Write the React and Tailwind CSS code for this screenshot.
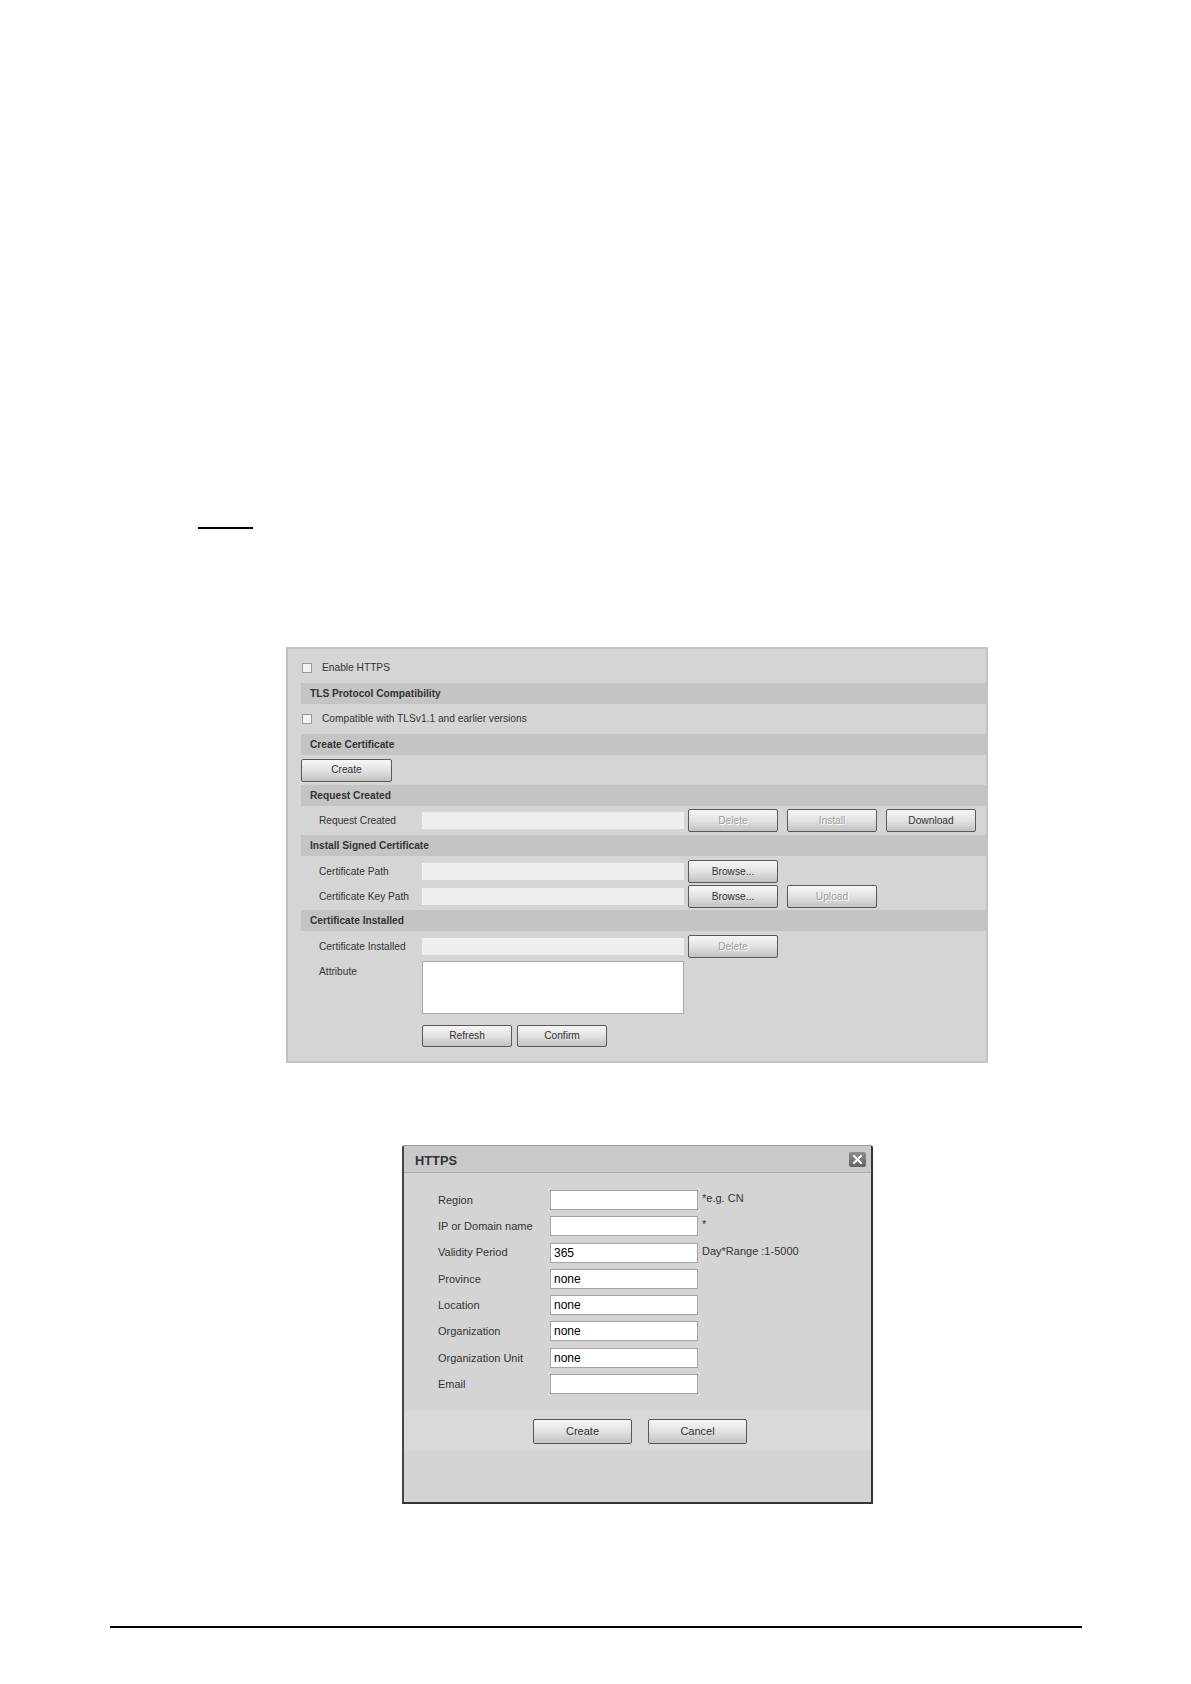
import React from "react";

const FONT = "font-['Liberation_Sans',Arial,sans-serif]";

function Btn({ children, disabled, w = "w-[90px]", h = "h-[23px]", text = "text-[10.2px]", className = "" }) {
  return (
    <div
      className={`${w} ${h} ${text} ${className} flex items-center justify-center border border-[#585858] rounded-[2px] bg-linear-to-b from-[#f7f7f7] via-[#e2e2e2] to-[#c2c2c2] ${
        disabled ? "text-[#9e9e9e] [text-shadow:1px_1px_0_#ffffff]" : "text-[#333333]"
      }`}
    >
      {children}
    </div>
  );
}

function Header({ children }) {
  return (
    <div className="h-[21px] bg-[#c4c4c4] flex items-center pl-[9px] text-[10.2px] font-bold text-[#333333]">
      {children}
    </div>
  );
}

function Check() {
  return <div className="w-[10px] h-[10px] border border-[#9a9a9a] bg-[#f3f3f3] shrink-0" />;
}

function Field() {
  return <div className="w-[262px] h-[17px] bg-[#efefef] shrink-0" />;
}

function Label({ children }) {
  return <div className="w-[121px] pl-[18px] shrink-0 text-[10.2px] text-[#333333]">{children}</div>;
}

function DialogRow({ label, value, hint }) {
  return (
    <div className="h-[20px] flex items-center">
      <div className="w-[146px] pl-[34px] shrink-0 text-[11px] text-[#333333]">{label}</div>
      <div className="w-[148px] h-[20px] border border-[#a5a5a5] bg-white flex items-center pl-[3px] text-[12px] text-black shrink-0">
        {value}
      </div>
      {hint && <div className="ml-[4px] text-[11px] text-[#333333] self-start leading-[16px]">{hint}</div>}
    </div>
  );
}

export default function App() {
  return (
    <div className={`w-[1191px] h-[1684px] bg-white overflow-hidden ${FONT}`}>
      <div className="pt-[527px] pl-[198px]">
        <div className="w-[55px] h-[1.5px] bg-black" />
      </div>

      {/* HTTPS settings panel */}
      <div className="mt-[118.5px] ml-[286px] w-[702px] h-[416px] border-2 border-[#c2c2c2] bg-[#d5d5d5] pl-[13px] flex flex-col">
        <div className="h-[34px] pt-[4px] flex items-center pl-[1px] gap-[10px] text-[10.2px] text-[#333333]">
          <Check />
          <span>Enable HTTPS</span>
        </div>
        <Header>TLS Protocol Compatibility</Header>
        <div className="h-[30px] flex items-center pl-[1px] gap-[10px] text-[10.2px] text-[#333333]">
          <Check />
          <span>Compatible with TLSv1.1 and earlier versions</span>
        </div>
        <Header>Create Certificate</Header>
        <div className="h-[30px] flex items-center">
          <Btn w="w-[91px]">Create</Btn>
        </div>
        <Header>Request Created</Header>
        <div className="h-[29px] flex items-center">
          <Label>Request Created</Label>
          <Field />
          <Btn disabled className="ml-[4px]">Delete</Btn>
          <Btn disabled className="ml-[9px]">Install</Btn>
          <Btn className="ml-[9px]">Download</Btn>
        </div>
        <Header>Install Signed Certificate</Header>
        <div className="h-[54px] pt-[4px] flex flex-col gap-[2px]">
          <div className="h-[23px] flex items-center">
            <Label>Certificate Path</Label>
            <Field />
            <Btn className="ml-[4px]">Browse...</Btn>
          </div>
          <div className="h-[23px] flex items-center">
            <Label>Certificate Key Path</Label>
            <Field />
            <Btn className="ml-[4px]">Browse...</Btn>
            <Btn disabled className="ml-[9px]">Upload</Btn>
          </div>
        </div>
        <Header>Certificate Installed</Header>
        <div className="pt-[4px] flex flex-col">
          <div className="h-[23px] flex items-center">
            <Label>Certificate Installed</Label>
            <Field />
            <Btn disabled className="ml-[4px]">Delete</Btn>
          </div>
          <div className="mt-[3px] flex items-start">
            <div className="w-[121px] pl-[18px] pt-[3px] shrink-0 text-[10.2px] text-[#333333]">Attribute</div>
            <div className="w-[262px] h-[53px] bg-white border border-[#a9a9a9]" />
          </div>
          <div className="mt-[11px] pl-[121px] flex items-center gap-[5px]">
            <Btn h="h-[22px]">Refresh</Btn>
            <Btn h="h-[22px]">Confirm</Btn>
          </div>
        </div>
      </div>

      {/* HTTPS create dialog */}
      <div className="mt-[82px] ml-[402px] w-[471px] h-[359px] border-x-2 border-b-2 border-t border-l-[#454545] border-r-[#353535] border-b-[#353535] border-t-[#9a9a9a] rounded-t-[3px] bg-[#d4d4d4] flex flex-col">
        <div className="h-[27px] bg-[#c9c9c9] border-b border-[#acacac] flex items-center justify-between pl-[11px] pr-[5px] shrink-0">
          <span className="text-[12.8px] font-bold text-[#333333] pt-[3px]">HTTPS</span>
          <div className="w-[17px] h-[15px] rounded-[2px] bg-linear-to-b from-[#8e8e8e] to-[#646464] flex items-center justify-center">
            <svg width="9" height="9" viewBox="0 0 9 9">
              <path d="M1 1 L8 8 M8 1 L1 8" stroke="#ffffff" strokeWidth="2" strokeLinecap="square" />
            </svg>
          </div>
        </div>
        <div className="pt-[17px] flex flex-col gap-[6.3px]">
          <DialogRow label="Region" value="" hint="*e.g. CN" />
          <DialogRow label="IP or Domain name" value="" hint="*" />
          <DialogRow label="Validity Period" value="365" hint="Day*Range :1-5000" />
          <DialogRow label="Province" value="none" />
          <DialogRow label="Location" value="none" />
          <DialogRow label="Organization" value="none" />
          <DialogRow label="Organization Unit" value="none" />
          <DialogRow label="Email" value="" />
        </div>
        <div className="mt-[17px] h-[40px] bg-[#d9d9d9] flex items-center justify-center gap-[16px] pl-[5px]">
          <Btn w="w-[99px]" h="h-[25px]" text="text-[11px]">Create</Btn>
          <Btn w="w-[99px]" h="h-[25px]" text="text-[11px]">Cancel</Btn>
        </div>
      </div>

      <div className="mt-[122px] ml-[110px] w-[972px] h-[2px] bg-black" />
    </div>
  );
}
